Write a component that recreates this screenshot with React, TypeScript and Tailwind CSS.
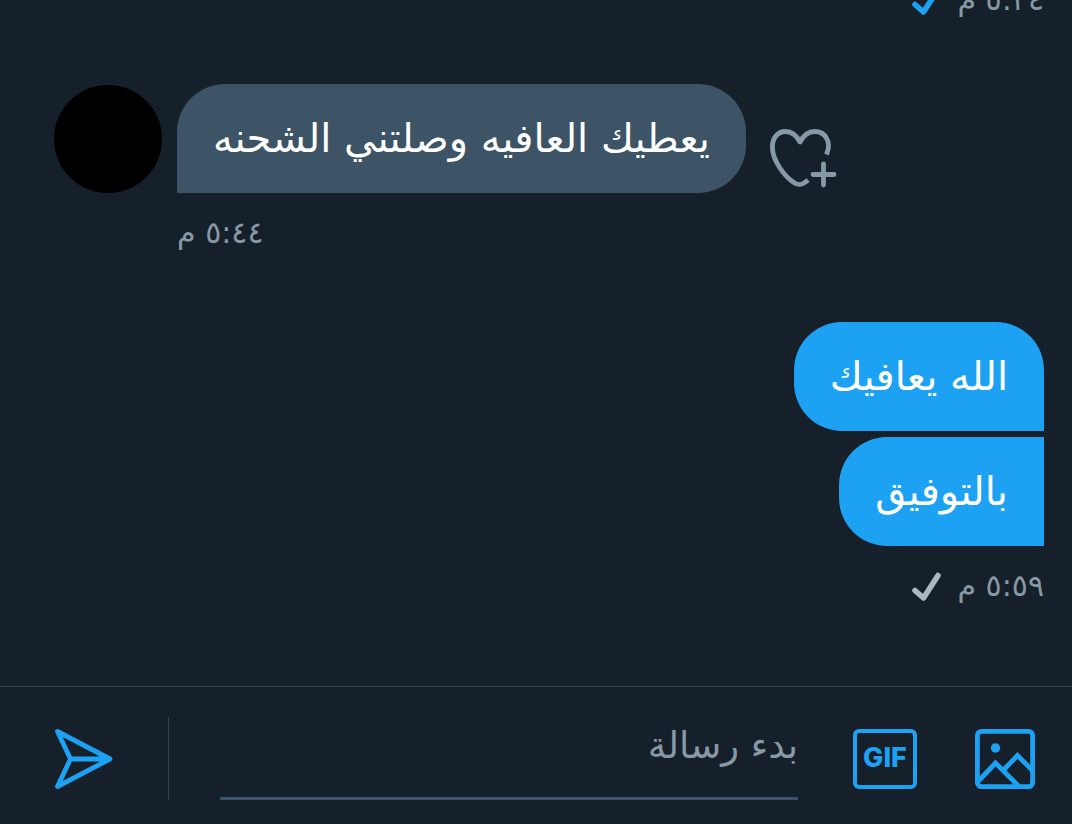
const HeartPlus = () => (
    <svg viewBox="0 0 68 60" className="h-[60px] w-[68px]" fill="none" stroke="currentColor" strokeWidth="4.8" strokeLinejoin="round" aria-hidden="true">
        <path d="M56.5 25.5C59 19.5 59 13.5 56.8 9.6C54.3 4.7 49.5 2.5 44.5 2.5C38 2.5 33.5 6.5 30 13C26.5 6.5 22 2.5 15.5 2.5C7.5 2.5 2.4 9 2.4 18C2.4 32 15 48 24.5 54C28.5 56.5 32 56.5 38 51" />
        <path d="M43 45.5H64M53.5 35V56" strokeLinecap="round" />
    </svg>
)

const Check = ({ className }: { className: string }) => (
    <svg viewBox="0 0 30 30" className={`h-[30px] w-[30px] ${className}`} fill="none" stroke="currentColor" strokeWidth="5.6" strokeLinecap="round" strokeLinejoin="round" aria-hidden="true">
        <path d="M4 19.5 L12.5 27 L27 4.5" />
    </svg>
)

const SendIcon = () => (
    <svg viewBox="0 0 60 62" className="h-[62px] w-[60px]" fill="none" stroke="currentColor" strokeWidth="4.8" strokeLinejoin="round" strokeLinecap="round" aria-hidden="true">
        <path d="M3.5 3.5 L56 31 L3.5 58.5 L16.5 31 Z M16.5 31H52" />
        <path d="M46 28 L54 31 L46 34 Z" fill="currentColor" strokeWidth="1" />
    </svg>
)

const PhotoIcon = () => (
    <svg viewBox="0 0 60 60" className="h-[60px] w-[60px]" fill="none" stroke="currentColor" strokeWidth="4.8" aria-hidden="true">
        <rect x="2.4" y="2.4" width="55.2" height="55.2" rx="4" />
        <circle cx="20.5" cy="19" r="4.7" fill="currentColor" stroke="none" />
        <path d="M3 52.5 L20.5 34 L44 57.5 M28 41.5 L42.5 26.5 L58 42" />
    </svg>
)

const Time = ({ value }: { value: string }) => (
    <time className="text-3xl leading-[48px] text-[#8899a6]">{value}</time>
)

const sent = [
    { text: "الله يعافيك", shape: "rounded-[48px] rounded-br-none" },
    { text: "بالتوفيق", shape: "rounded-l-[48px]" },
];

const App = () => {

    return (
        <div dir="rtl" lang="ar" className="flex h-screen flex-col bg-[#16202a] font-['DejaVu_Sans',sans-serif]">
            <main className="flex flex-1 flex-col justify-end overflow-hidden pr-7 pb-[76px] pl-[54px]">
                <div className="flex items-center gap-4">
                    <Time value="٥:٢٤ م" />
                    <Check className="text-[#1da1f2]" />
                </div>

                {/* Received */}
                <div className="mt-[60px] flex flex-col gap-4" dir="ltr">
                    <div className="flex items-end">
                        <div className="size-[108px] rounded-full bg-black" />
                        <p dir="rtl" className="ml-[15px] rounded-[48px] rounded-bl-none bg-[#3d5466] px-9 text-[40px] leading-[109px] text-white">
                            يعطيك العافيه وصلتني الشحنه
                        </p>
                        <button type="button" aria-label="تفاعل" className="mb-1 ml-6 text-[#8899a6]">
                            <HeartPlus />
                        </button>
                    </div>
                    <div dir="rtl" className="ml-[123px] flex self-start">
                        <Time value="٥:٤٤ م" />
                    </div>
                </div>

                {/* Sent */}
                <div className="mt-[65px] flex flex-col items-start gap-1.5">
                    {sent.map((m) => (
                        <p key={m.text} className={`bg-[#1da1f2] px-9 text-[40px] leading-[109px] text-white ${m.shape}`}>
                            {m.text}
                        </p>
                    ))}
                    <div className="mt-2.5 flex items-center gap-4">
                        <Time value="٥:٥٩ م" />
                        <Check className="text-[#aab8c2]" />
                    </div>
                </div>
            </main>

            <footer className="flex items-center border-t border-[#38444d] pt-[30px] pr-[37px] pb-6 pl-[54px] text-[#1da1f2]">
                <button type="button" aria-label="صورة">
                    <PhotoIcon />
                </button>
                <button type="button" className="mr-[58px] h-[60px] w-16 rounded-md border-4 border-current font-['Inter',sans-serif] text-[27px] font-extrabold">
                    GIF
                </button>
                <input
                    type="text"
                    aria-label="بدء رسالة"
                    placeholder="بدء رسالة"
                    className="mr-[55px] h-[83px] min-w-0 flex-1 border-b-3 border-[#3d5466] pb-6 text-[37px] text-white outline-none placeholder:text-[#8899a6]"
                />
                <div className="mr-[51px] h-[83px] w-px bg-[#38444d]" />
                <button type="button" aria-label="إرسال" className="mr-[54px]">
                    <SendIcon />
                </button>
            </footer>
        </div>
    )
}

export default App;
